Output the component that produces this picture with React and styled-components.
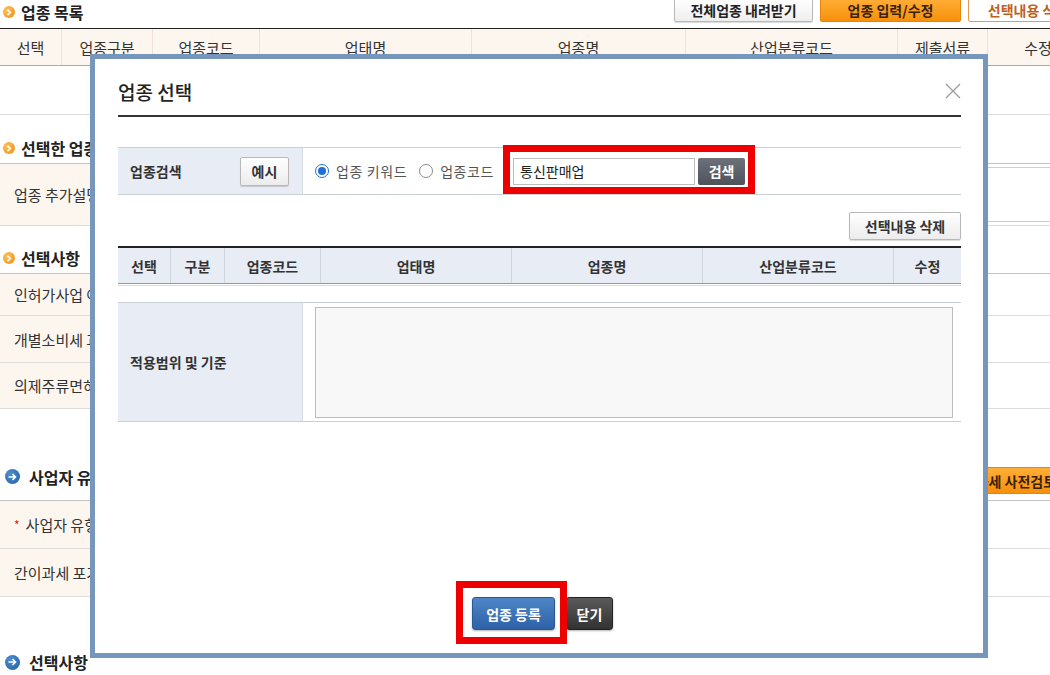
import styled, { createGlobalStyle, css } from "styled-components";

const GlobalStyle = createGlobalStyle`
  html, body {
    margin: 0;
    padding: 0;
    background: #fff;
    overflow: hidden;
  }
  body {
    font-family: "Noto Sans CJK KR", "Noto Sans", sans-serif;
    color: #333;
  }
  * {
    box-sizing: border-box;
  }
`;

const Page = styled.div`
  position: relative;
  width: 1088px;
  height: 675px;
  overflow: hidden;
`;

/* ---------- background page ---------- */

const TopBar = styled.div`
  display: flex;
  justify-content: space-between;
  align-items: flex-start;
  height: 29px;
  border-bottom: 1px solid #222;
`;

const SectionTitle = styled.div`
  display: flex;
  align-items: center;
  gap: ${(p) => (p.$blue ? "9px" : "6px")};
  height: ${(p) => p.$h || 30}px;
  margin-top: ${(p) => p.$mt || 0}px;
  padding-left: ${(p) => (p.$blue ? "5px" : "3px")};
  padding-bottom: ${(p) => p.$pb || 0}px;
  font-size: 16px;
  font-weight: 700;
  color: #222;
  line-height: 1;
`;

const TitleRow = styled.div`
  display: flex;
  justify-content: space-between;
  align-items: center;
  height: 39px;
  margin-top: 52px;
`;

const OrangeDot = styled.span`
  display: inline-flex;
  align-items: center;
  justify-content: center;
  width: 12px;
  height: 12px;
  border-radius: 50%;
  background: radial-gradient(circle at 35% 35%, #ffc25a, #f08a10);
`;

const BlueDot = styled.span`
  display: inline-flex;
  align-items: center;
  justify-content: center;
  width: 15px;
  height: 15px;
  border-radius: 50%;
  background: radial-gradient(circle at 35% 35%, #4f8fd0, #1f5fa3);
`;

const TopButtons = styled.div`
  display: flex;
  gap: 7px;
  margin-top: -2px;
`;

const buttonKinds = {
  gray: css`
    background: linear-gradient(#ffffff, #eeeeee);
    border: 1px solid #b9b9b9;
    color: #222;
    box-shadow: 0 1px 1px rgba(0, 0, 0, 0.15);
  `,
  orange: css`
    background: linear-gradient(#ffae36, #f7900c);
    border: 1px solid #e5850b;
    color: #3a2208;
  `,
  outline: css`
    background: #fff;
    border: 1px solid #e59a4f;
    color: #c0601c;
  `,
};

const PageButton = styled.button`
  height: ${(p) => p.$h || 24}px;
  width: ${(p) => p.$w}px;
  padding: 0;
  font-family: inherit;
  font-size: 14px;
  font-weight: 700;
  line-height: 1;
  border-radius: 2px;
  ${(p) => buttonKinds[p.$kind]}
`;

const ListHeader = styled.div`
  display: grid;
  grid-template-columns: 61px 91px 107px 212px 214px 212px 90px 1fr;
  height: 37px;
  background: #fdf6ef;
  border-bottom: 1px solid #a8a8a8;
`;

const ListHeadCell = styled.div`
  display: flex;
  align-items: center;
  justify-content: center;
  font-size: 15px;
  color: #333;
  border-left: ${(p) => (p.$first ? "none" : "1px solid #eee2d8")};
`;

const EmptyRow = styled.div`
  height: 49px;
  border-bottom: 1px solid #dcdcdc;
`;

const FormTable = styled.div`
  border-top: 1px solid #c4c4c4;
`;

const FormRow = styled.div`
  display: grid;
  grid-template-columns: 180px 1fr;
  height: ${(p) => p.$h}px;
  border-bottom: 1px solid #dcdcdc;
`;

const FormLabel = styled.div`
  display: flex;
  align-items: center;
  gap: 6px;
  padding-left: 14px;
  background: #fdf6ef;
  font-size: 15px;
  color: #333;
  white-space: nowrap;
`;

const FormValue = styled.div`
  padding: 3px 8px;
`;

const PlainArea = styled.div`
  height: 100%;
  border-top: 1px solid #cfcfcf;
  border-bottom: 1px solid #cfcfcf;
`;

const RedStar = styled.span`
  color: #e0201a;
  font-size: 12px;
`;

/* ---------- modal ---------- */

const Modal = styled.div`
  position: absolute;
  left: 90px;
  top: 54px;
  width: 898px;
  height: 604px;
  border: 5px solid #7696bc;
  background: #fff;
  display: flex;
  flex-direction: column;
  padding: 0 22px 0 23px;
`;

const ModalHeader = styled.div`
  display: flex;
  justify-content: space-between;
  align-items: center;
  height: 58px;
  padding-top: 8px;
  border-bottom: 2px solid #333;
`;

const ModalTitle = styled.h2`
  margin: 0;
  font-size: 19px;
  font-weight: 500;
  color: #222;
  line-height: 1;
`;

const TableBox = styled.div`
  display: grid;
  grid-template-columns: 185px 1fr;
  height: ${(p) => p.$h}px;
  margin-top: ${(p) => p.$mt}px;
  border-top: 1px solid #cbd0d7;
  border-bottom: 1px solid #cbd0d7;
`;

const LabelCell = styled.div`
  display: flex;
  align-items: center;
  justify-content: space-between;
  padding: 0 13px 0 12px;
  background: #e8ecf5;
  border-right: 1px solid #d6dbe4;
  font-size: 14px;
  font-weight: 700;
  color: #333;
  line-height: 1;
`;

const SearchCell = styled.div`
  display: flex;
  align-items: center;
  padding-left: 12px;
`;

const LightButton = styled.button`
  height: ${(p) => p.$h}px;
  width: ${(p) => p.$w}px;
  padding: 0;
  font-family: inherit;
  font-size: 14px;
  font-weight: 700;
  color: #333;
  line-height: 1;
  background: linear-gradient(#ffffff, #ececec);
  border: 1px solid #b8b8b8;
  border-radius: 2px;
  box-shadow: 0 1px 1px rgba(0, 0, 0, 0.15);
`;

const RadioLabel = styled.label`
  display: flex;
  align-items: center;
  gap: 7px;
  margin-right: ${(p) => p.$mr}px;
  font-size: 14px;
  letter-spacing: 0.6px;
  color: #555;
  line-height: 1;
`;

const Radio = styled.span`
  position: relative;
  width: 14px;
  height: 14px;
  border-radius: 50%;
  border: 1px solid ${(p) => (p.$checked ? "#1f6fd8" : "#8a8a8a")};
  background: #fff;

  &::after {
    content: "";
    position: absolute;
    inset: 2px;
    border-radius: 50%;
    background: ${(p) => (p.$checked ? "#1f6fd8" : "transparent")};
  }
`;

const KeywordInput = styled.input`
  width: 182px;
  height: 27px;
  padding: 0 6px;
  border: 1px solid #bdbdbd;
  font-family: inherit;
  font-size: 14px;
  color: #222;
  outline: none;
`;

const SearchButton = styled.button`
  width: 47px;
  height: 27px;
  margin-left: 3px;
  padding: 0;
  border: none;
  border-radius: 2px;
  background: linear-gradient(#6c717a, #4e535b);
  color: #fff;
  font-family: inherit;
  font-size: 14px;
  font-weight: 700;
  line-height: 1;
`;

const ActionBar = styled.div`
  display: flex;
  justify-content: flex-end;
  margin-top: 17px;
  margin-bottom: 6px;
`;

const ResultHeader = styled.div`
  display: grid;
  grid-template-columns: 52px 54px 96px 191px 191px 191px 1fr;
  height: 38px;
  background: #e8ecf5;
  border-top: 2px solid #222;
  border-bottom: 1px solid #9a9a9a;
`;

const ResultHeadCell = styled.div`
  display: flex;
  align-items: center;
  justify-content: center;
  font-size: 14px;
  font-weight: 700;
  color: #333;
  border-left: ${(p) => (p.$first ? "none" : "1px solid #cfd5df")};
`;

const ThinRule = styled.div`
  margin-top: 1px;
  border-top: 1px solid #dcdcdc;
`;

const AreaCell = styled.div`
  padding: 4px 8px 3px 12px;
`;

const ReadArea = styled.textarea`
  display: block;
  width: 100%;
  height: 100%;
  resize: none;
  background: #f8f8f8;
  border: 1px solid #bcbcbc;
  outline: none;
`;

const Footer = styled.div`
  display: flex;
  justify-content: center;
  gap: 11px;
  margin-top: auto;
  padding: 0 0 23px 6px;
`;

const footerKinds = {
  blue: css`
    background: linear-gradient(#4f86c8, #2d62a6);
    border: 1px solid #2a5893;
  `,
  dark: css`
    background: linear-gradient(#5a5a5a, #323232);
    border: 1px solid #222;
  `,
};

const FooterButton = styled.button`
  width: ${(p) => p.$w}px;
  height: 33px;
  padding: 0;
  border-radius: 3px;
  color: #fff;
  font-family: inherit;
  font-size: 14px;
  font-weight: 700;
  line-height: 1;
  box-shadow: 0 1px 2px rgba(0, 0, 0, 0.3);
  ${(p) => footerKinds[p.$kind]}
`;

const Highlight = styled.div`
  position: absolute;
  left: ${(p) => p.$x}px;
  top: ${(p) => p.$y}px;
  width: ${(p) => p.$w}px;
  height: ${(p) => p.$h}px;
  border: 7px solid #ee0000;
  pointer-events: none;
`;

/* ---------- icons ---------- */

function Chevron() {
  return (
    <svg width="6" height="7" viewBox="0 0 6 7">
      <path d="M1.5 0.8 L4.3 3.5 L1.5 6.2" fill="none" stroke="#fff" strokeWidth="1.6" />
    </svg>
  );
}

function Arrow() {
  return (
    <svg width="9" height="8" viewBox="0 0 9 8">
      <path d="M0.5 4 H7.5 M4.5 1 L7.5 4 L4.5 7" fill="none" stroke="#fff" strokeWidth="1.6" />
    </svg>
  );
}

function CloseIcon() {
  return (
    <svg width="16" height="16" viewBox="0 0 16 16">
      <path d="M1 1 L15 15 M15 1 L1 15" stroke="#999" strokeWidth="1.2" />
    </svg>
  );
}

const listCols = ["선택", "업종구분", "업종코드", "업태명", "업종명", "산업분류코드", "제출서류", "수정"];
const resultCols = ["선택", "구분", "업종코드", "업태명", "업종명", "산업분류코드", "수정"];

export default function App() {
  return (
    <Page>
      <GlobalStyle />

      <TopBar>
        <SectionTitle $h={24}>
          <OrangeDot>
            <Chevron />
          </OrangeDot>
          업종 목록
        </SectionTitle>
        <TopButtons>
          <PageButton $kind="gray" $w={139}>전체업종 내려받기</PageButton>
          <PageButton $kind="orange" $w={141}>업종 입력/수정</PageButton>
          <PageButton $kind="outline" $w={120}>선택내용 삭제</PageButton>
        </TopButtons>
      </TopBar>
      <ListHeader>
        {listCols.map((c, i) => (
          <ListHeadCell key={c} $first={i === 0}>
            {c}
          </ListHeadCell>
        ))}
      </ListHeader>
      <EmptyRow />

      <SectionTitle $mt={18}>
        <OrangeDot>
          <Chevron />
        </OrangeDot>
        선택한 업종 목록
      </SectionTitle>
      <FormTable>
        <FormRow $h={62}>
          <FormLabel>업종 추가설명</FormLabel>
          <FormValue>
            <PlainArea />
          </FormValue>
        </FormRow>
      </FormTable>

      <SectionTitle $mt={17}>
        <OrangeDot>
          <Chevron />
        </OrangeDot>
        선택사항
      </SectionTitle>
      <FormTable>
        <FormRow $h={42}>
          <FormLabel>인허가사업 여부</FormLabel>
          <FormValue />
        </FormRow>
        <FormRow $h={47}>
          <FormLabel>개별소비세 과세여부</FormLabel>
          <FormValue />
        </FormRow>
        <FormRow $h={46}>
          <FormLabel>의제주류면허 여부</FormLabel>
          <FormValue />
        </FormRow>
      </FormTable>

      <TitleRow>
        <SectionTitle $blue $h={39} $pb={8}>
          <BlueDot>
            <Arrow />
          </BlueDot>
          사업자 유형 선택
        </SectionTitle>
        <PageButton $kind="orange" $w={170} $h={27}>
          간이과세 사전검토
        </PageButton>
      </TitleRow>
      <FormTable>
        <FormRow $h={48}>
          <FormLabel>
            <RedStar>*</RedStar>사업자 유형
          </FormLabel>
          <FormValue />
        </FormRow>
        <FormRow $h={48}>
          <FormLabel>간이과세 포기여부</FormLabel>
          <FormValue />
        </FormRow>
      </FormTable>

      <SectionTitle $blue $mt={50}>
        <BlueDot>
          <Arrow />
        </BlueDot>
        선택사항
      </SectionTitle>

      <Modal>
        <ModalHeader>
          <ModalTitle>업종 선택</ModalTitle>
          <CloseIcon />
        </ModalHeader>

        <TableBox $h={48} $mt={30}>
          <LabelCell>
            업종검색
            <LightButton $w={49} $h={29}>예시</LightButton>
          </LabelCell>
          <SearchCell>
            <RadioLabel $mr={12}>
              <Radio $checked />
              업종 키워드
            </RadioLabel>
            <RadioLabel $mr={19}>
              <Radio />
              업종코드
            </RadioLabel>
            <KeywordInput readOnly value="통신판매업" />
            <SearchButton>검색</SearchButton>
          </SearchCell>
        </TableBox>

        <ActionBar>
          <LightButton $w={112} $h={28}>선택내용 삭제</LightButton>
        </ActionBar>

        <ResultHeader>
          {resultCols.map((c, i) => (
            <ResultHeadCell key={c} $first={i === 0}>
              {c}
            </ResultHeadCell>
          ))}
        </ResultHeader>
        <ThinRule />

        <TableBox $h={120} $mt={16}>
          <LabelCell>적용범위 및 기준</LabelCell>
          <AreaCell>
            <ReadArea readOnly />
          </AreaCell>
        </TableBox>

        <Footer>
          <FooterButton $kind="blue" $w={83}>업종 등록</FooterButton>
          <FooterButton $kind="dark" $w={47}>닫기</FooterButton>
        </Footer>

        <Highlight $x={408} $y={86} $w={252} $h={49} />
        <Highlight $x={361} $y={522} $w={111} $h={63} />
      </Modal>
    </Page>
  );
}
